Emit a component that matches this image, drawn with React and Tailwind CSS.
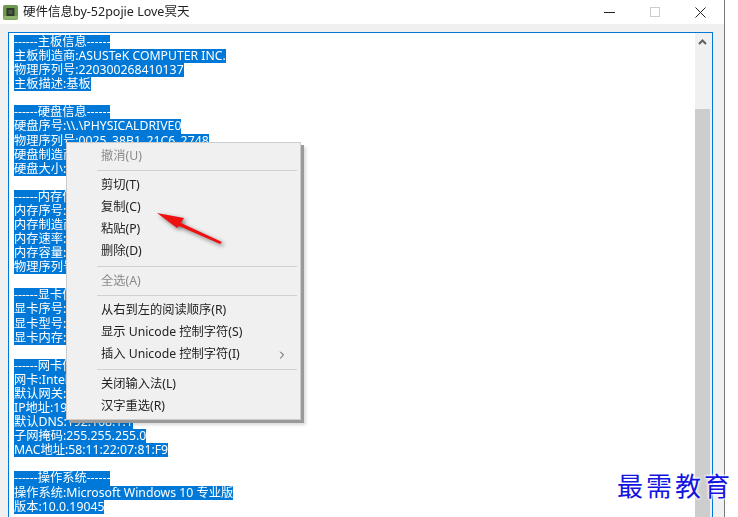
import { ChevronRight } from 'lucide-react'

const lines = [
  '------主板信息------',
  '主板制造商:ASUSTeK COMPUTER INC.',
  '物理序列号:220300268410137',
  '主板描述:基板',
  '',
  '------硬盘信息------',
  '硬盘序号:\\\\.\\PHYSICALDRIVE0',
  '物理序列号:0025_38B1_21C6_2748',
  '硬盘制造商:Samsung SSD 970 EVO Plus 500GB_100',
  '硬盘大小:500GB',
  '',
  '------内存信息------',
  '内存序号:0',
  '内存制造商:Kingston',
  '内存速率:2666',
  '内存容量:16GB',
  '物理序列号:1234567',
  '',
  '------显卡信息------',
  '显卡序号:0',
  '显卡型号:NVIDIA',
  '显卡内存:4GB',
  '',
  '------网卡信息------',
  '网卡:Intel(R) Ethernet',
  '默认网关:192.168.1.1',
  'IP地址:192.168.1.5',
  '默认DNS:192.168.1.1',
  '子网掩码:255.255.255.0',
  'MAC地址:58:11:22:07:81:F9',
  '',
  '------操作系统------',
  '操作系统:Microsoft Windows 10 专业版',
  '版本:10.0.19045',
]

const menu = [
  { label: '撤消(U)', disabled: true },
  { sep: true },
  { label: '剪切(T)' },
  { label: '复制(C)' },
  { label: '粘贴(P)' },
  { label: '删除(D)' },
  { sep: true },
  { label: '全选(A)', disabled: true },
  { sep: true },
  { label: '从右到左的阅读顺序(R)' },
  { label: '显示 Unicode 控制字符(S)' },
  { label: '插入 Unicode 控制字符(I)', sub: true },
  { sep: true },
  { label: '关闭输入法(L)' },
  { label: '汉字重选(R)' },
]

const ChipIcon = () => (
  <svg width="15" height="15" viewBox="0 0 15 15">
    <rect x="0" y="0" width="15" height="15" rx="2" fill="#6d9a4e" />
    <rect x="0.5" y="11" width="14" height="3.5" fill="#8fb56c" />
    <rect x="3.5" y="3" width="8" height="8" fill="#2e3a2a" />
    <rect x="5.5" y="5" width="4" height="4" fill="#4c5a46" />
  </svg>
)

const App = () => {
  return (
    <div className="w-[738px] h-[517px] overflow-hidden bg-white flex font-['Noto_Sans','Noto_Sans_CJK_SC',sans-serif]">
      {/* Window */}
      <div className="w-[725px] h-full flex flex-col border-r border-[#7a7a7a] relative">
        <div className="h-6 shrink-0 bg-white flex items-center pl-[3px]">
          <ChipIcon />
          <span className="ml-[5px] text-[12.5px] text-[#222] blur-[0.3px]">硬件信息by-52pojie Love冥天</span>
          <div className="ml-auto flex items-center pr-[18px] gap-[35px]">
            <span className="w-[11px] h-px bg-[#222]" />
            <span className="w-[10px] h-[10px] border border-[#ccc]" />
            <svg width="11" height="11" viewBox="0 0 11 11" stroke="#222" strokeWidth="1">
              <path d="M0.5 0.5L10.5 10.5M10.5 0.5L0.5 10.5" />
            </svg>
          </div>
        </div>

        <div className="flex-1 bg-[#f0f0f0] pt-2 pl-2 pr-[11px] min-h-0">
          <div className="h-[500px] bg-white border border-[#0078d7] flex overflow-hidden">
            <div className="flex-1 pl-[5px] pt-0.5 text-[12.25px] leading-[14.09px] overflow-hidden blur-[0.3px]">
              {lines.map((line, i) => (
                <div key={i} className="h-[14.09px] whitespace-nowrap">
                  <span className="bg-[#0078d7] text-white inline-block h-[14.09px]">{line}</span>
                </div>
              ))}
            </div>
            <div className="w-[17px] shrink-0 bg-[#f0f0f0] pr-0.5 flex flex-col">
              <div className="h-[76px] flex justify-center pt-[6px]">
                <svg width="9" height="6" viewBox="0 0 9 6" fill="none" stroke="#606060" strokeWidth="2">
                  <path d="M1 5L4.5 1.5L8 5" />
                </svg>
              </div>
              <div className="flex-1 bg-[#cdcdcd]" />
            </div>
          </div>
        </div>

        {/* Context menu */}
        <div className="absolute left-[66px] top-[142px] w-[235px] h-[278px] bg-[#f0f0f0] border border-[#cccccc] py-0.5 shadow-[3px_3px_0_#9a9a9a,5px_5px_3px_rgba(0,0,0,0.15)] text-[12.25px] text-[#222]">
          {menu.map((item, i) =>
            item.sep ? (
              <div key={i} className="h-[7.5px] ml-[30px] mr-[3px] flex items-center">
                <div className="h-px w-full bg-[#d0d0d0]" />
              </div>
            ) : (
              <div key={i} className={`h-[22px] flex items-center pl-[34px] pr-3 ${item.disabled ? 'text-[#8a8a8a]' : ''}`}>
                <span className="blur-[0.3px]">{item.label}</span>
                {item.sub && <ChevronRight className="ml-auto w-3 h-3 text-[#444]" />}
              </div>
            )
          )}
        </div>

        {/* Arrow annotation */}
        <svg className="absolute left-[150px] top-[205px] drop-shadow-[2px_2px_2px_rgba(0,0,0,0.5)]" width="80" height="45" viewBox="0 0 80 45">
          <polygon points="7,8 34,13 31,18 72,37 70,39 29,21 27,23" fill="#ee1111" />
        </svg>
      </div>

      {/* Watermark */}
      <div className="absolute left-[617px] top-[468px] text-[26px] leading-[34px] tracking-[3px] text-[#1414e0] font-['Noto_Sans_CJK_SC',serif] [text-shadow:0_0_3px_white,0_0_3px_white,0_0_3px_white]">
        最需教育
      </div>
    </div>
  )
}

export default App
